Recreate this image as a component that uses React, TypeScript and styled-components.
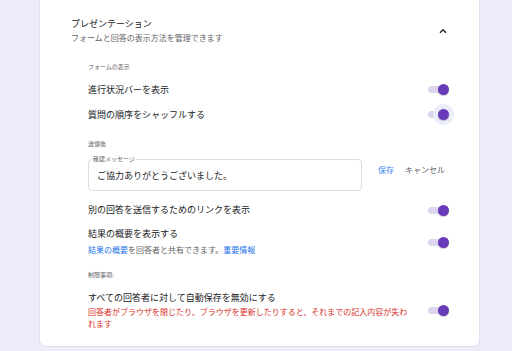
import { FC } from 'react';
import styled, { createGlobalStyle } from 'styled-components';

const GlobalStyle = createGlobalStyle`
  html, body {
    margin: 0;
    padding: 0;
    background: #f0ebf8;
  }
  body {
    font-family: 'Noto Sans CJK JP', 'Noto Sans', sans-serif;
    color: #202124;
  }
`;

const Page = styled.div`
  display: flex;
  padding-left: 39px;
  width: 512px;
  height: 351px;
  box-sizing: border-box;
  overflow: hidden;
`;

const Card = styled.div`
  display: flex;
  flex-direction: column;
  width: 441px;
  height: 347px;
  box-sizing: border-box;
  background: #ffffff;
  border: 1px solid #e4dff0;
  border-top: none;
  border-radius: 0 0 7px 7px;
  padding: 17px 30px 0 31px;
`;

const Header = styled.div`
  display: flex;
  justify-content: space-between;
  align-items: center;
`;

const TitleBlock = styled.div`
  display: flex;
  flex-direction: column;
`;

const Title = styled.div`
  font-size: 9px;
  line-height: 14px;
  color: #202124;
`;

const Subtitle = styled.div`
  margin-top: 1px;
  font-size: 8px;
  line-height: 12px;
  color: #5f6368;
`;

const Chevron = styled.button`
  display: flex;
  align-items: center;
  justify-content: center;
  width: 12px;
  height: 20px;
  margin-right: 0;
  padding: 0;
  border: none;
  background: none;
`;

const Body = styled.div`
  display: flex;
  flex-direction: column;
  padding-left: 17px;
`;

const SectionLabel = styled.div<{ mt: number }>`
  margin-top: ${({ mt }) => mt}px;
  font-size: 6px;
  line-height: 10px;
  color: #5f6368;
`;

const Row = styled.div<{ h?: number; mt?: number }>`
  display: flex;
  justify-content: space-between;
  align-items: center;
  min-height: ${({ h }) => h ?? 25}px;
  margin-top: ${({ mt }) => mt ?? 0}px;
`;

const RowText = styled.div`
  display: flex;
  flex-direction: column;
  width: 324px;
`;

const RowTitle = styled.div`
  font-size: 9px;
  line-height: 14px;
  color: #202124;
`;

const RowSub = styled.div<{ danger?: boolean }>`
  margin-top: ${({ danger }) => (danger ? 1 : 2)}px;
  font-size: 8px;
  line-height: ${({ danger }) => (danger ? 12 : 14)}px;
  color: ${({ danger }) => (danger ? '#d93025' : '#5f6368')};
`;

const Link = styled.span`
  color: #1a73e8;
`;

const SwitchWrap = styled.div`
  position: relative;
  width: 21px;
  height: 11px;
  flex-shrink: 0;
`;

const Track = styled.div`
  position: absolute;
  left: 0;
  top: 2px;
  width: 19px;
  height: 7px;
  border-radius: 4px;
  background: #ddd5ee;
`;

const Halo = styled.div`
  position: absolute;
  right: -5px;
  top: -5px;
  width: 21px;
  height: 21px;
  border-radius: 50%;
  background: #eaeefa;
`;

const Thumb = styled.div`
  position: absolute;
  right: 0;
  top: 0;
  width: 11px;
  height: 11px;
  border-radius: 50%;
  background: #673ab7;
  box-shadow: 0 1px 1px rgba(0, 0, 0, 0.2);
`;

const MessageRow = styled.div`
  display: flex;
  align-items: flex-start;
  margin-top: 10px;
`;

const Field = styled.div`
  position: relative;
  width: 274px;
  height: 32px;
  box-sizing: border-box;
  border: 1px solid #dadce0;
  border-radius: 4px;
  display: flex;
  align-items: center;
  padding: 2px 8px 0;
`;

const FieldLabel = styled.span`
  position: absolute;
  left: 3px;
  top: -6px;
  padding: 0 1px;
  background: #ffffff;
  font-size: 6px;
  line-height: 10px;
  color: #5f6368;
`;

const FieldValue = styled.span`
  font-size: 9px;
  line-height: 14px;
  color: #202124;
`;

const Actions = styled.div`
  display: flex;
  gap: 11px;
  margin-left: 16px;
  margin-top: 4px;
`;

const TextButton = styled.span<{ primary?: boolean }>`
  font-size: 8px;
  line-height: 14px;
  color: ${({ primary }) => (primary ? '#4285f4' : '#5f6368')};
`;

const Switch: FC<{ focused?: boolean }> = ({ focused }) => (
  <SwitchWrap>
    <Track />
    {focused && <Halo />}
    <Thumb />
  </SwitchWrap>
);

const App = () => (
  <Page>
    <GlobalStyle />
    <Card>
      <Header>
        <TitleBlock>
          <Title>プレゼンテーション</Title>
          <Subtitle>フォームと回答の表示方法を管理できます</Subtitle>
        </TitleBlock>
        <Chevron>
          <svg width="8" height="6" viewBox="0 0 8 6">
            <polyline points="1,4.8 4,1.8 7,4.8" fill="none" stroke="#202124" strokeWidth="1.4" />
          </svg>
        </Chevron>
      </Header>
      <Body>
        <SectionLabel mt={18}>フォームの表示</SectionLabel>
        <Row mt={5}>
          <RowTitle>進行状況バーを表示</RowTitle>
          <Switch />
        </Row>
        <Row>
          <RowTitle>質問の順序をシャッフルする</RowTitle>
          <Switch focused />
        </Row>
        <SectionLabel mt={12}>送信後</SectionLabel>
        <MessageRow>
          <Field>
            <FieldLabel>確認メッセージ</FieldLabel>
            <FieldValue>ご協力ありがとうございました。</FieldValue>
          </Field>
          <Actions>
            <TextButton primary>保存</TextButton>
            <TextButton>キャンセル</TextButton>
          </Actions>
        </MessageRow>
        <Row h={24} mt={7}>
          <RowTitle>別の回答を送信するためのリンクを表示</RowTitle>
          <Switch />
        </Row>
        <Row mt={5}>
          <RowText>
            <RowTitle>結果の概要を表示する</RowTitle>
            <RowSub>
              <Link>結果の概要</Link>を回答者と共有できます。<Link>重要情報</Link>
            </RowSub>
          </RowText>
          <Switch />
        </Row>
        <SectionLabel mt={13}>制限事項:</SectionLabel>
        <Row mt={11}>
          <RowText>
            <RowTitle>すべての回答者に対して自動保存を無効にする</RowTitle>
            <RowSub danger>
              回答者がブラウザを閉じたり、ブラウザを更新したりすると、それまでの記入内容が失われます
            </RowSub>
          </RowText>
          <Switch />
        </Row>
      </Body>
    </Card>
  </Page>
);

export default App;
